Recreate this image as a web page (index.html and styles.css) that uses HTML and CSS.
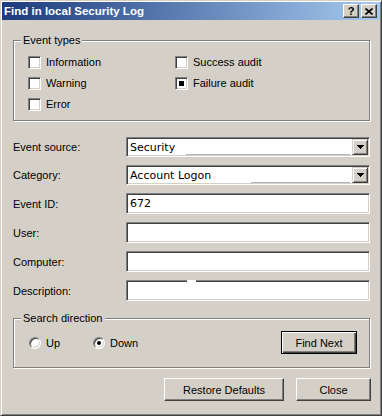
FILE: index.html
```html
<!DOCTYPE html>
<html>
<head>
<meta charset="utf-8">
<link rel="stylesheet" href="styles.css">
</head>
<body>
<div class="window">
  <div class="titlebar">
    <span class="title">Find in local Security Log</span>
    <div class="tbtns">
      <span class="tbtn help">?</span>
      <span class="tbtn close-x">
        <svg width="8" height="7" viewBox="0 0 8 7"><path d="M0.5 0.5 L7.5 6.5 M7.5 0.5 L0.5 6.5" stroke="#000" stroke-width="1.6" fill="none"/></svg>
      </span>
    </div>
  </div>
  <div class="content">
    <fieldset class="group types">
      <legend>Event types</legend>
      <div class="checks">
        <label class="check"><span class="box"></span>Information</label>
        <label class="check"><span class="box"></span>Warning</label>
        <label class="check"><span class="box"></span>Error</label>
        <label class="check"><span class="box"></span>Success audit</label>
        <label class="check"><span class="box on"></span>Failure audit</label>
      </div>
    </fieldset>

    <div class="form">
      <div class="row">
        <span class="lbl">Event source:</span>
        <div class="field combo"><span class="val">Security</span><span class="ghost ghost-a"></span><span class="drop"><svg width="7" height="4" viewBox="0 0 7 4"><rect x="0" y="0" width="7" height="1"/><rect x="1" y="1" width="5" height="1"/><rect x="2" y="2" width="3" height="1"/><rect x="3" y="3" width="1" height="1"/></svg></span></div>
      </div>
      <div class="row">
        <span class="lbl">Category:</span>
        <div class="field combo"><span class="val">Account Logon</span><span class="ghost ghost-b"></span><span class="drop"><svg width="7" height="4" viewBox="0 0 7 4"><rect x="0" y="0" width="7" height="1"/><rect x="1" y="1" width="5" height="1"/><rect x="2" y="2" width="3" height="1"/><rect x="3" y="3" width="1" height="1"/></svg></span></div>
      </div>
      <div class="row">
        <span class="lbl">Event ID:</span>
        <div class="field text"><span class="val">672</span></div>
      </div>
      <div class="row">
        <span class="lbl">User:</span>
        <div class="field text"></div>
      </div>
      <div class="row">
        <span class="lbl">Computer:</span>
        <div class="field text"></div>
      </div>
      <div class="row">
        <span class="lbl">Description:</span>
        <div class="field text desc"></div>
      </div>
    </div>

    <fieldset class="group dir">
      <legend>Search direction</legend>
      <div class="dir-row">
        <div class="radios">
          <label class="radio"><span class="circle"></span>Up</label>
          <label class="radio"><span class="circle on"></span>Down</label>
        </div>
        <button class="btn default find">Find Next</button>
      </div>
    </fieldset>

    <div class="actions">
      <button class="btn restore">Restore Defaults</button>
      <button class="btn close">Close</button>
    </div>
  </div>
</div>
</body>
</html>
```

FILE: styles.css
```css
* { box-sizing: border-box; }
html, body { margin: 0; padding: 0; }
body {
  background: #d4d0c8;
  font-family: "Liberation Sans", Arial, sans-serif;
  font-size: 11px;
  color: #000;
}
.window {
  width: 382px;
  height: 416px;
  border: 1px solid;
  border-color: #d4d0c8 #404040 #404040 #d4d0c8;
  box-shadow: inset 1px 1px #fff, inset -1px -1px #808080;
  padding: 1px;
  display: flex;
  flex-direction: column;
}
.titlebar {
  height: 18px;
  flex: none;
  background: linear-gradient(to right, #1c3a7c, #a6caf0);
  display: flex;
  align-items: center;
  justify-content: space-between;
  padding: 0 3px 0 2px;
}
.title {
  color: #fff;
  font-weight: bold;
  font-size: 11.5px;
  white-space: nowrap;
}
.tbtns { display: flex; gap: 2px; }
.tbtn {
  width: 16px;
  height: 14px;
  background: #d4d0c8;
  border: 1px solid;
  border-color: #fff #404040 #404040 #fff;
  box-shadow: inset -1px -1px #808080;
  display: flex;
  align-items: center;
  justify-content: center;
  font-weight: bold;
  font-size: 11px;
  line-height: 1;
}
.content {
  padding: 14px 10px 0 11px;
  display: flex;
  flex-direction: column;
}
fieldset.group {
  margin: 0;
  padding: 0;
  min-width: 0;
  border: 1px solid #808080;
  box-shadow: inset 1px 1px #fff, 1px 1px #fff;
}
legend {
  margin-left: 7px;
  padding: 0 2px;
  line-height: 13px;
  background: #d4d0c8;
}
.checks {
  display: grid;
  grid-template-columns: 147px 1fr;
  grid-template-rows: repeat(3, 13px);
  grid-auto-flow: column;
  row-gap: 8px;
  padding: 9px 0 9px 14px;
}
.check {
  display: flex;
  align-items: center;
  gap: 5px;
  line-height: 13px;
  white-space: nowrap;
}
.box {
  width: 13px;
  height: 13px;
  flex: none;
  background: #fff;
  border: 1px solid;
  border-color: #808080 #fff #fff #808080;
  box-shadow: inset 1px 1px #404040, inset -1px -1px #d4d0c8;
  display: flex;
  align-items: center;
  justify-content: center;
}
.box.on::after {
  content: "";
  width: 5px;
  height: 5px;
  background: #000;
}
.form {
  margin-top: 16px;
  display: flex;
  flex-direction: column;
  gap: 8px;
}
.row { display: flex; align-items: center; }
.lbl { width: 113px; flex: none; }
.field {
  flex: 1;
  height: 21px;
  background: #fff;
  border: 1px solid;
  border-color: #808080 #fff #fff #808080;
  box-shadow: inset 1px 1px #404040, inset -1px -1px #d4d0c8;
  font-family: "DejaVu Sans", sans-serif;
  font-size: 11px;
  padding: 0 1px 0 3px;
  display: flex;
  align-items: center;
}
.field.combo { height: 20px; }
.ghost {
  flex: 1;
  align-self: flex-end;
  height: 1px;
  margin: 0 2px 1px 0;
  background: #b4b4b4;
}
.ghost-a { margin-left: 11px; }
.ghost-b { margin-left: 40px; }
.drop {
  width: 16px;
  height: 16px;
  flex: none;
  background: #d4d0c8;
  border: 1px solid;
  border-color: #d4d0c8 #404040 #404040 #d4d0c8;
  box-shadow: inset 1px 1px #fff, inset -1px -1px #808080;
  display: flex;
  align-items: center;
  justify-content: center;
}
.drop svg { display: block; fill: #000; }
.desc { position: relative; }
.desc::before {
  content: "";
  position: absolute;
  top: -1px;
  left: 60px;
  width: 9px;
  height: 2px;
  background: #fff;
}
fieldset.dir { margin-top: 11px; }
.dir-row {
  display: flex;
  align-items: center;
  justify-content: space-between;
  padding: 6px 12px 13px 15px;
}
.radios { display: flex; }
.radio {
  display: flex;
  align-items: center;
  gap: 5px;
}
.radio:first-child { width: 64px; }
.circle {
  width: 12px;
  height: 12px;
  flex: none;
  border-radius: 50%;
  background: #fff;
  border: 1px solid;
  border-color: #808080 #fff #fff #808080;
  box-shadow: inset 1px 1px #404040, inset -1px -1px #d4d0c8;
  display: flex;
  align-items: center;
  justify-content: center;
}
.circle.on::after {
  content: "";
  width: 4px;
  height: 4px;
  border-radius: 50%;
  background: #000;
}
.btn {
  height: 23px;
  margin: 0;
  padding: 0;
  background: #d4d0c8;
  border: 1px solid;
  border-color: #fff #404040 #404040 #fff;
  box-shadow: inset -1px -1px #808080;
  font-family: "Liberation Sans", Arial, sans-serif;
  font-size: 11px;
  color: #000;
  display: flex;
  align-items: center;
  justify-content: center;
}
.btn.default {
  border-color: #000;
  box-shadow: inset 1px 1px #fff, inset -1px -1px #404040, inset -2px -2px #808080;
}
.find { width: 76px; }
.actions {
  margin-top: 10px;
  margin-right: -1px;
  display: flex;
  justify-content: flex-end;
  gap: 12px;
}
.restore { width: 120px; }
.close { width: 75px; }
```
